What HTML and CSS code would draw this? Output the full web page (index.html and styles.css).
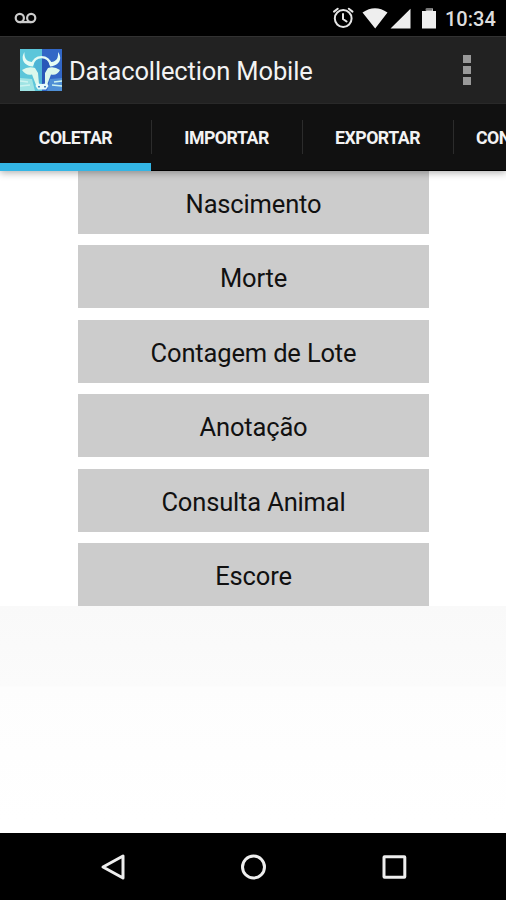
FILE: index.html
```html
<!DOCTYPE html>
<html lang="pt">
<head>
<meta charset="utf-8">
<title>Datacollection Mobile</title>
<link rel="stylesheet" href="styles.css">
</head>
<body>
<div class="phone">
  <div class="status">
    <svg class="voicemail" width="24" height="14" viewBox="0 0 24 14"><g fill="none" stroke="#ccc" stroke-width="2.2"><circle cx="5.8" cy="6" r="4.1"/><circle cx="17.2" cy="6" r="4.1"/><path d="M5.8 10.1H17.2"/></g></svg>
    <svg class="indicators" width="108" height="24" viewBox="0 0 108 24">
      <g fill="none" stroke="#e6e6e6" stroke-width="2" stroke-linecap="round"><circle cx="11.2" cy="12.5" r="8.4"/><path d="M11 8v5l3.6 2.5M2 5.6L5.7 2.7M20.5 5.6L16.8 2.7"/></g>
      <path fill="#eee" d="M30.5 6.5Q43 -2 55.5 6.5L43.2 22.5ZM58.5 22.5H78.5V2.7ZM90 5H94.2V2.6H101V5H104V22.5H90Z"/>
      <path fill="#777" d="M93.5 2.6h7v2h-7z"/>
    </svg>
    <span class="clock">10:34</span>
  </div>
  <header class="appbar">
    <svg class="logo" width="42" height="42" viewBox="0 0 42 42">
      <path fill="#5cc6da" d="M0 0h22v42H0z"/><path fill="#3267c6" d="M22 0h20v42H22z"/>
      <path fill="#4fb4d6" d="M14 15q2-6 8-6v27h-5z"/><path fill="#2a58b8" d="M22 9q6 0 8 7l-5 20h-3z"/>
      <path fill="#9fe4e4" d="M0 29l12 1 3 12H0z"/><path fill="#4f8fd6" d="M42 29l-12 1-3 12h15z"/>
      <path fill="none" stroke="#e4fbf4" stroke-width="2.4" d="M12 16C15 5.500 28 5.500 31 16"/>
      <path fill="#e4fbf4" d="M4.500 3C4 10 7 13 14 13L13 17.500C4 17 0 10 4.500 3ZM38 3C38.500 10 36 13 29 13L30 17.500C39 17 43 10 38 3Z"/>
      <path fill="#dcf8ec" d="M2 21Q8 17 15 19L18 24L19 35L16 36L12 25.500Q6 27 2 21ZM40 21Q34 17 28 19L25 24L25 35L27 36L31 25.500Q37 27 40 21Z"/>
      <path fill="#e8fbfa" d="M17 34Q22 36 27 34L28.500 37L26 40.500H18L15.500 37Z"/>
      <path stroke="#cdf3f0" stroke-width="1.300" d="M0 32l8 1M0 37l10-1M42 32l-8 1M42 37l-10-1"/>
      <path fill="#4582ba" d="M18 37h2v1.500h-2zM24 37h2v1.500h-2z"/>
    </svg>
    <h1 class="title">Datacollection Mobile</h1>
    <div class="overflow"><i></i><i></i><i></i></div>
  </header>
  <nav class="tabs">
    <div class="tab active">COLETAR</div>
    <div class="tab">IMPORTAR</div>
    <div class="tab">EXPORTAR</div>
    <div class="tab clipped">CONFIG</div>
  </nav>
  <main class="content">
    <div class="list">
      <div class="item">Nascimento</div>
      <div class="item">Morte</div>
      <div class="item">Contagem de Lote</div>
      <div class="item">Anotação</div>
      <div class="item">Consulta Animal</div>
      <div class="item">Escore</div>
    </div>
    <div class="rest"></div>
  </main>
  <footer class="navbar">
    <svg width="28" height="30" viewBox="0 0 28 30"><path d="M24 4V26L4 15Z"/></svg>
    <svg width="28" height="30" viewBox="0 0 28 30"><circle cx="14.5" cy="15" r="11"/></svg>
    <svg width="28" height="30" viewBox="0 0 28 30"><rect x="4" y="4.8" width="20.8" height="20.5" rx=".5"/></svg>
  </footer>
</div>
</body>
</html>
```
FILE: styles.css
```css
* { box-sizing: border-box; }
body { margin: 0; font-family: Roboto, sans-serif; }
.phone { width: 506px; height: 900px; display: flex; flex-direction: column; overflow: hidden; background: #fff; }
.status { height: 36px; flex: none; display: flex; align-items: center; background: #000; padding: 0 10px 0 14px; }
.voicemail { margin-top: 1px; }
.indicators { margin-left: auto; margin-top: -1px; }
.clock { width: 51px; margin-left: 5px; margin-top: 2px; color: #ddd; font-size: 20px; font-weight: 500; white-space: nowrap; }
.appbar { height: 67px; flex: none; display: flex; align-items: center; background: #222; border-top: 1px solid #323232; padding: 0 35px 0 19.5px; }
.logo { margin-top: -1px; }
.title { margin: 1px 0 0 7.5px; font-size: 25.5px; letter-spacing: -.14px; font-weight: 400; color: #f3f3f3; white-space: nowrap; }
.overflow { margin: -1px 0 0 auto; display: grid; gap: 3px; }
.overflow i { width: 8px; height: 8px; background: #999; }
.tabs { height: 67.5px; flex: none; display: flex; background: #111; border-top: 1px solid #292929; border-bottom: 1px solid #000; position: relative; z-index: 1; clip-path: inset(0 0 -20px 0); box-shadow: 0 2px 7px rgba(0,0,0,.3); }
.tab { width: 151px; flex: none; display: flex; align-items: center; justify-content: center; position: relative; color: #f3f3f3; font-size: 17.7px; letter-spacing: -.48px; font-weight: 700; white-space: nowrap; padding-top: 2px; }
.tab + .tab::before { content: ""; position: absolute; left: 0; top: 16px; width: 1px; height: 34px; background: #2c2c2c; }
.active { box-shadow: inset 0 -7px #33b5e5, 0 1px #33b5e5; }
.clipped { justify-content: flex-start; padding-left: 23px; }
.content { height: 662.5px; flex: none; display: flex; flex-direction: column; }
.list { padding-left: 78px; display: grid; grid-template-columns: 351px; gap: 11.6px; }
.item { height: 63px; display: flex; align-items: center; justify-content: center; padding-top: 3px; background: #ccc; color: #111; font-size: 25.5px; letter-spacing: -.16px; }
.rest { flex: 1; background: linear-gradient(#f9f9f9 0, #fbfbfb 80px, #fdfdfd 81px, #fff 215px); }
.navbar { height: 67px; flex: none; display: flex; justify-content: center; align-items: center; gap: 112.5px; background: #000; }
.navbar svg { fill: none; stroke: #eee; stroke-width: 3; stroke-linejoin: round; }
```
